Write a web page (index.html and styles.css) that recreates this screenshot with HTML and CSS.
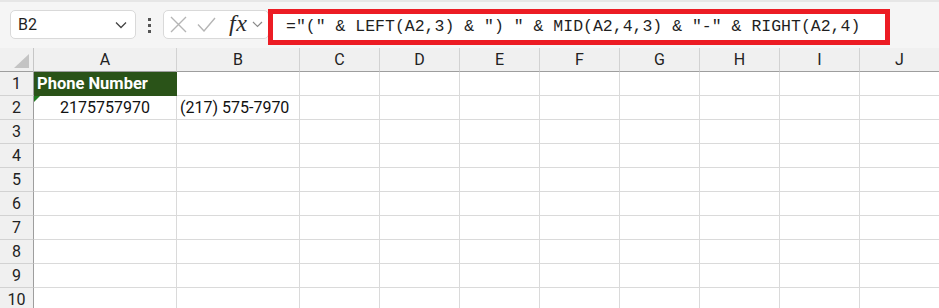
FILE: index.html
```html
<!DOCTYPE html>
<html>
<head>
<meta charset="utf-8">
<link rel="stylesheet" href="styles.css">
</head>
<body>
<div class="toolbar">
  <div class="namebox">
    <span class="name">B2</span>
    <svg class="chev" width="12" height="8" viewBox="0 0 12 8"><path d="M1 1.5 L6 6.5 L11 1.5" fill="none" stroke="#444" stroke-width="1.3"/></svg>
  </div>
  <div class="dots"><i></i><i></i><i></i></div>
  <div class="fxbox">
    <svg class="ico" width="17" height="17" viewBox="0 0 17 17"><path d="M1 1 L16 16 M16 1 L1 16" stroke="#b5b5b5" stroke-width="1.4" fill="none"/></svg>
    <svg class="ico check" width="19" height="15" viewBox="0 0 19 15"><path d="M1 7.5 L7 14 L18 1" stroke="#b5b5b5" stroke-width="1.4" fill="none"/></svg>
    <span class="fx">fx</span>
    <svg class="smallchev" width="11" height="7" viewBox="0 0 11 7"><path d="M1 1 L5.5 5.5 L10 1" fill="none" stroke="#8a8a8a" stroke-width="1.2"/></svg>
  </div>
  <div class="formula">="(" &amp; LEFT(A2,3) &amp; ") " &amp; MID(A2,4,3) &amp; "-" &amp; RIGHT(A2,4)</div>
</div>
<div class="sheet">
  <div class="corner"><span class="tri"></span></div>
  <div class="ch">A</div><div class="ch">B</div><div class="ch">C</div><div class="ch">D</div><div class="ch">E</div><div class="ch">F</div><div class="ch">G</div><div class="ch">H</div><div class="ch">I</div><div class="ch">J</div>

  <div class="rh">1</div><div class="c head">Phone Number</div><div class="c"></div><div class="c"></div><div class="c"></div><div class="c"></div><div class="c"></div><div class="c"></div><div class="c"></div><div class="c"></div><div class="c"></div>
  <div class="rh">2</div><div class="c num"><span class="flag"></span>2175757970</div><div class="c">(217) 575-7970</div><div class="c"></div><div class="c"></div><div class="c"></div><div class="c"></div><div class="c"></div><div class="c"></div><div class="c"></div><div class="c"></div>
  <div class="rh">3</div><div class="c"></div><div class="c"></div><div class="c"></div><div class="c"></div><div class="c"></div><div class="c"></div><div class="c"></div><div class="c"></div><div class="c"></div><div class="c"></div>
  <div class="rh">4</div><div class="c"></div><div class="c"></div><div class="c"></div><div class="c"></div><div class="c"></div><div class="c"></div><div class="c"></div><div class="c"></div><div class="c"></div><div class="c"></div>
  <div class="rh">5</div><div class="c"></div><div class="c"></div><div class="c"></div><div class="c"></div><div class="c"></div><div class="c"></div><div class="c"></div><div class="c"></div><div class="c"></div><div class="c"></div>
  <div class="rh">6</div><div class="c"></div><div class="c"></div><div class="c"></div><div class="c"></div><div class="c"></div><div class="c"></div><div class="c"></div><div class="c"></div><div class="c"></div><div class="c"></div>
  <div class="rh">7</div><div class="c"></div><div class="c"></div><div class="c"></div><div class="c"></div><div class="c"></div><div class="c"></div><div class="c"></div><div class="c"></div><div class="c"></div><div class="c"></div>
  <div class="rh">8</div><div class="c"></div><div class="c"></div><div class="c"></div><div class="c"></div><div class="c"></div><div class="c"></div><div class="c"></div><div class="c"></div><div class="c"></div><div class="c"></div>
  <div class="rh">9</div><div class="c"></div><div class="c"></div><div class="c"></div><div class="c"></div><div class="c"></div><div class="c"></div><div class="c"></div><div class="c"></div><div class="c"></div><div class="c"></div>
  <div class="rh">10</div><div class="c"></div><div class="c"></div><div class="c"></div><div class="c"></div><div class="c"></div><div class="c"></div><div class="c"></div><div class="c"></div><div class="c"></div><div class="c"></div>
</div>
</body>
</html>
```
FILE: styles.css
```css
html, body {
  margin: 0;
  padding: 0;
  background: #fff;
  overflow: hidden;
}
body {
  width: 939px;
  height: 308px;
  font-family: Roboto, "Liberation Sans", sans-serif;
  color: #1f1f1f;
}
.toolbar {
  height: 48px;
  box-sizing: border-box;
  background: #f5f5f5;
  border-top: 2px solid #e6e6e6;
  display: flex;
  align-items: center;
  padding-left: 10px;
}
.namebox {
  width: 126px;
  height: 29px;
  box-sizing: border-box;
  background: #fff;
  border: 1px solid #d9d9d9;
  border-radius: 5px;
  display: flex;
  align-items: center;
  justify-content: space-between;
  padding: 0 8px 0 7px;
  margin-top: -1px;
}
.name {
  font-size: 16px;
  color: #1f1f1f;
}
.dots {
  width: 27px;
  display: flex;
  flex-direction: column;
  align-items: center;
  gap: 3px;
}
.dots i {
  width: 3px;
  height: 3px;
  background: #555;
  display: block;
}
.fxbox {
  width: 106px;
  height: 29px;
  box-sizing: border-box;
  background: #fff;
  border: 1px solid #d9d9d9;
  border-radius: 5px;
  display: flex;
  align-items: center;
  padding-left: 6px;
  margin-top: -1px;
}
.ico { display: block; }
.check { margin-left: 10px; }
.fx {
  font-family: "Liberation Serif", "DejaVu Serif", serif;
  font-style: italic;
  font-size: 24px;
  color: #2a2a2a;
  margin-left: 13px;
  line-height: 1;
  margin-top: -3px;
  letter-spacing: 0.5px;
}
.smallchev { margin-left: 5px; display: block; }
.formula {
  width: 622px;
  height: 36px;
  box-sizing: border-box;
  border: 5px solid #ec1c24;
  background: #fff;
  margin-left: -1px;
  margin-top: 3px;
  padding-left: 13px;
  font-family: "Liberation Mono", "DejaVu Sans Mono", monospace;
  font-size: 16.5px;
  letter-spacing: 0px;
  line-height: 26px;
  color: #1f1f1f;
  white-space: pre;
}
.sheet {
  display: grid;
  grid-template-columns: 34px 143px 123px repeat(8, 80px);
  grid-auto-rows: 24px;
  background: #fff;
}
.corner {
  background: #f0f0f0;
  border-right: 1px solid #c6c6c6;
  border-bottom: 1px solid #9e9e9e;
  box-sizing: border-box;
  position: relative;
}
.tri {
  position: absolute;
  right: 4px;
  bottom: 3px;
  width: 0;
  height: 0;
  border-left: 15px solid transparent;
  border-bottom: 14px solid #c4c4c4;
}
.ch {
  background: #f0f0f0;
  box-sizing: border-box;
  border-right: 1px solid #d2d2d2;
  border-bottom: 1px solid #9e9e9e;
  text-align: center;
  font-size: 16px;
  line-height: 23px;
  color: #222;
}
.rh {
  background: #f0f0f0;
  box-sizing: border-box;
  border-right: 1px solid #9e9e9e;
  border-bottom: 1px solid #d2d2d2;
  text-align: center;
  font-size: 16px;
  line-height: 23px;
  color: #222;
}
.c {
  box-sizing: border-box;
  border-right: 1px solid #dadada;
  border-bottom: 1px solid #dadada;
  font-size: 16px;
  line-height: 23px;
  padding-left: 3px;
  white-space: nowrap;
  overflow: visible;
  color: #111;
  position: relative;
}
.head {
  background: #2a5318;
  color: #fff;
  font-weight: bold;
  font-size: 16.5px;
  border-right-color: #2a5318;
  border-bottom-color: #2a5318;
}
.num {
  text-align: center;
  padding-left: 0;
}
.flag {
  position: absolute;
  left: 0;
  top: 0;
  width: 0;
  height: 0;
  border-top: 6px solid #1f7a1f;
  border-right: 6px solid transparent;
}
```
